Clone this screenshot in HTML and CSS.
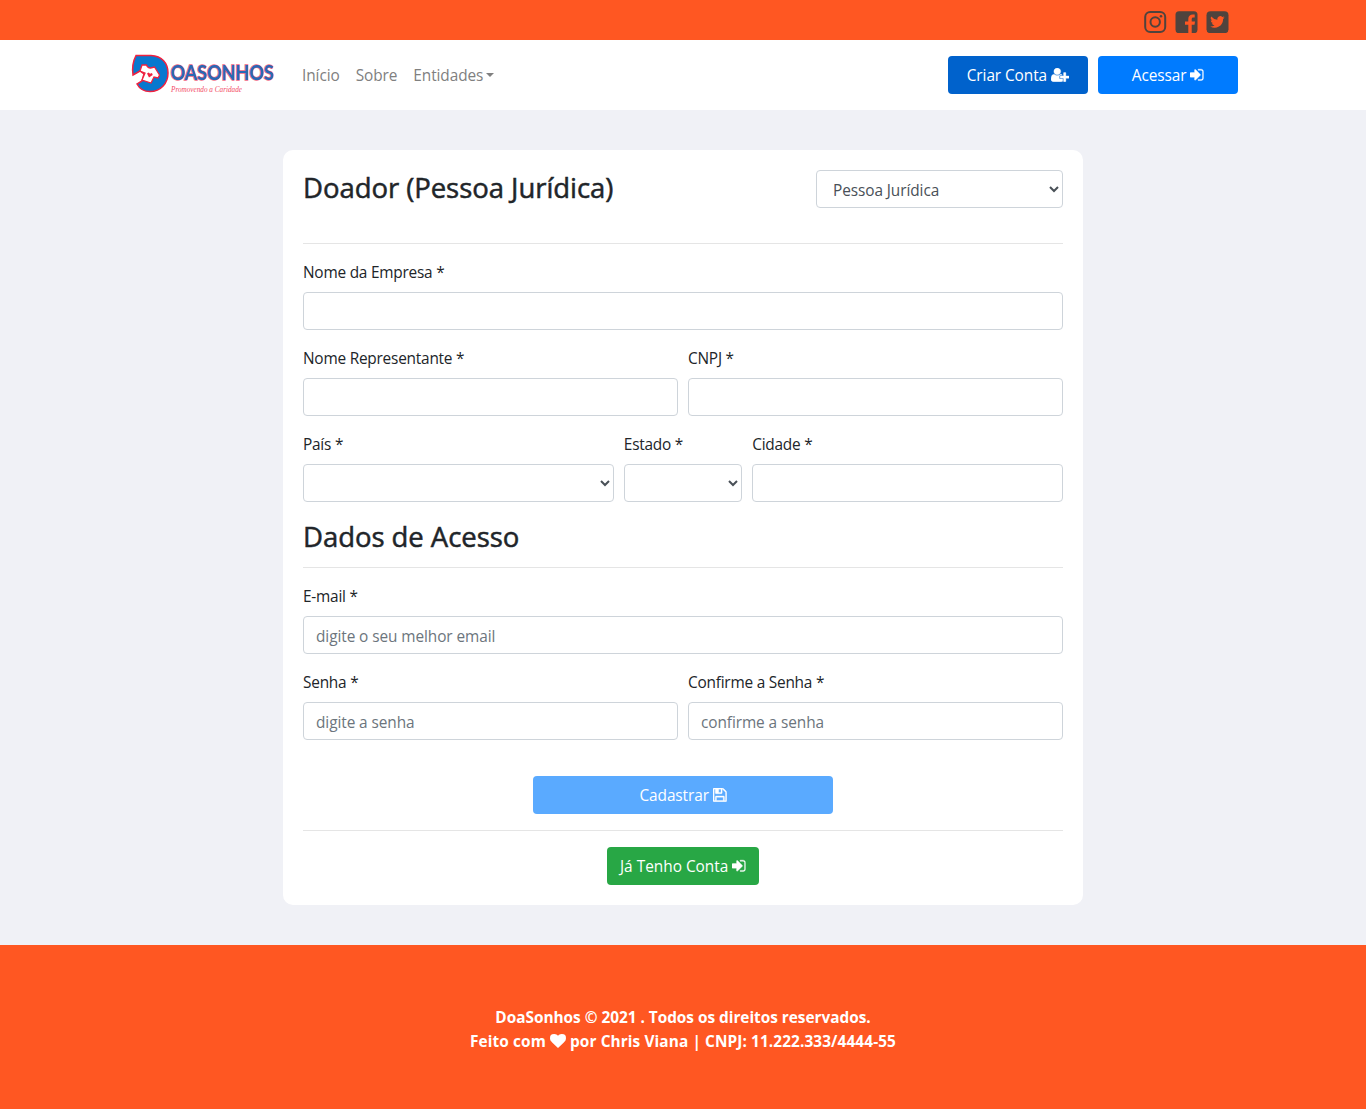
FILE: index.html
```html
<!DOCTYPE html>
<html lang="pt-BR">
<head>
<meta charset="utf-8">
<title>DoaSonhos</title>
<link rel="stylesheet" href="styles.css">
</head>
<body>
<svg class="sprite" aria-hidden="true">
  <symbol id="sign-in" viewBox="0 128 1536 1536"><path d="M1184 896q0 26-19 45l-544 544q-19 19-45 19t-45-19-19-45v-288h-448q-26 0-45-19t-19-45v-384q0-26 19-45t45-19h448v-288q0-26 19-45t45-19 45 19l544 544q19 19 19 45zm352-352v704q0 119-84.500 203.500t-203.500 84.500h-320q-13 0-22.500-9.500t-9.500-22.500q0-4-1-20t-.5-26.500 3-23.500 10-19.500 20.500-6.500h320q66 0 113-47t47-113v-704q0-66-47-113t-113-47h-312l-11.500-1-11.500-3-8-5.500-7-9-2-13.500q0-4-1-20t-.5-26.500 3-23.500 10-19.500 20.500-6.500h320q119 0 203.500 84.500t84.500 203.500z"/></symbol>
</svg>
<div class="topbar">
  <div class="container social">
    <svg width="23" height="23" viewBox="0 0 23 23" fill="none" stroke="#50433d" stroke-width="2"><rect x="1.200" y="2" width="20" height="20" rx="5"/><circle cx="11.200" cy="12" r="4.700"/><circle cx="17" cy="6.200" r="1.300" fill="#50433d" stroke="none"/></svg>
    <svg width="23" height="23" viewBox="0 0 23 23"><rect x=".5" y="1.200" width="22" height="22" rx="3.500" fill="#50433d"/><path fill="#ff5722" d="M13.300 23v-8.200h-3.300v-3.300h3.300V9.100c0-3 1.800-4.600 4.400-4.600h2v3.100h-1.300c-1.300 0-1.700.7-1.700 1.700v2.200H20l-.5 3.300h-2.800V23z"/></svg>
    <svg width="23" height="23" viewBox="0 0 23 23"><rect x=".5" y="1.200" width="22" height="22" rx="4" fill="#50433d"/><path fill="#ff5722" transform="translate(4.200 4.700) scale(.6)" d="M24 4.600a10 10 0 0 1-2.800.8 5 5 0 0 0 2.200-2.700 10 10 0 0 1-3.100 1.200 4.900 4.900 0 0 0-8.400 4.500A14 14 0 0 1 1.700 3.200a4.900 4.900 0 0 0 1.500 6.500 5 5 0 0 1-2.200-.6c0 2.300 1.600 4.400 3.900 4.900a5 5 0 0 1-2.200.1 4.900 4.900 0 0 0 4.600 3.400A9.900 9.900 0 0 1 0 19.500 14 14 0 0 0 21.500 7.100 10 10 0 0 0 24 4.600z"/></svg>
  </div>
</div>
<header class="header">
  <div class="container navbar">
    <svg class="logo" width="150" height="50" viewBox="0 0 150 50">
      <path d="M8 5.500H23C34 6 40 13 40 23S33 41.500 22 41.500Q13 41.500 9 34L14 31 16 24 12 21 5 25Q3.500 14 8 5.500z" fill="#0878cf" stroke="#f0213f" stroke-width="1.500"/>
      <path d="M14 15h4.500q1 3 4 3l4-1 5 8-1.500 3-4-1-3 6-9-3 3-7-5-2z" fill="#fff" stroke="#f0213f" stroke-width="1.300"/>
      <path d="M19 23.500l1.700-1 1.300 1.200 2-.7.700 2-3.700 2.500z" fill="#f0213f"/>
      <text class="logo-name" x="42.500" y="30" textLength="103" lengthAdjust="spacingAndGlyphs">OASONHOS</text>
      <text class="logo-tag" x="43" y="42" textLength="71" lengthAdjust="spacingAndGlyphs">Promovendo a Caridade</text>
    </svg>
    <nav class="menu"><a>Início</a><a>Sobre</a><a class="dropdown">Entidades</a></nav>
    <div class="actions">
      <button class="btn dark">Criar Conta <svg class="icon wide" viewBox="0 128 2048 1536"><path d="M704 896q-159 0-271.500-112.500t-112.500-271.500 112.500-271.500 271.500-112.500 271.500 112.500 112.500 271.500-112.500 271.500-271.500 112.500zm960 128h352q13 0 22.500 9.500t9.500 22.500v192q0 13-9.500 22.500t-22.500 9.500h-352v352q0 13-9.500 22.500t-22.500 9.500h-192q-13 0-22.500-9.500t-9.500-22.500v-352h-352q-13 0-22.500-9.500t-9.500-22.500v-192q0-13 9.500-22.500t22.500-9.500h352v-352q0-13 9.500-22.500t22.500-9.500h192q13 0 22.500 9.500t9.500 22.500v352zm-736 224q0 52 38 90t90 38h256v238q-68 50-171 50h-874q-121 0-194-69t-73-190q0-53 3.500-103.500t14-109 26.500-108.500 43-97.500 62-81 85.500-53.500 111.500-20q19 0 39 17 79 61 154.500 91.500t164.500 30.500 164.500-30.500 154.500-91.500q20-17 39-17 132 0 217 96h-223q-52 0-90 38t-38 90v192z"/></svg></button>
      <button class="btn">Acessar <svg class="icon"><use href="#sign-in"/></svg></button>
    </div>
  </div>
</header>
<main class="main">
  <form class="card">
    <div class="card-head">
      <h3>Doador (Pessoa Jurídica)</h3>
      <select class="control kind"><option>Pessoa Jurídica</option></select>
    </div>
    <hr>
    <div class="row">
      <label class="field full"><span>Nome da Empresa *</span><input class="control"></label>
      <label class="field half"><span>Nome Representante *</span><input class="control"></label>
      <label class="field half"><span>CNPJ *</span><input class="control"></label>
    </div>
    <div class="row place">
      <label class="field"><span>País *</span><select class="control"></select></label>
      <label class="field"><span>Estado *</span><select class="control"></select></label>
      <label class="field"><span>Cidade *</span><input class="control"></label>
    </div>
    <h3 class="access">Dados de Acesso</h3>
    <hr>
    <div class="row">
      <label class="field full"><span>E-mail *</span><input class="control" placeholder="digite o seu melhor email"></label>
      <label class="field half"><span>Senha *</span><input class="control" placeholder="digite a senha"></label>
      <label class="field half"><span>Confirme a Senha *</span><input class="control" placeholder="confirme a senha"></label>
    </div>
    <div class="submit"><button type="button" class="btn save">Cadastrar <svg class="icon" viewBox="128 128 1536 1536"><path d="M512 1536h768v-384h-768v384zm896 0h128v-896q0-14-10-38.500t-20-34.500l-281-281q-10-10-34-20t-39-10v416q0 40-28 68t-68 28h-576q-40 0-68-28t-28-68v-416h-128v1280h128v-416q0-40 28-68t68-28h832q40 0 68 28t28 68v416zm-384-928v-320q0-13-9.500-22.500t-22.500-9.500h-192q-13 0-22.500 9.500t-9.500 22.500v320q0 13 9.500 22.500t22.500 9.500h192q13 0 22.500-9.500t9.500-22.500zm640 32v928q0 40-28 68t-68 28h-1344q-40 0-68-28t-28-68v-1344q0-40 28-68t68-28h928q40 0 88 20t76 48l280 280q28 28 48 76t20 88z"/></svg></button></div>
    <hr>
    <div class="login"><button type="button" class="btn green">Já Tenho Conta <svg class="icon"><use href="#sign-in"/></svg></button></div>
  </form>
</main>
<footer class="footer">
  <div class="copyright">DoaSonhos © 2021 . Todos os direitos reservados.</div>
  <div class="credits">Feito com <svg class="icon heart" viewBox="0 128 1792 1536"><path d="M896 1664q-26 0-44-18l-624-602q-10-8-27.500-26t-55.500-65.500-68-97.500-53.500-121-23.500-138q0-220 127-344t351-124q62 0 126.500 21.500t120 58 95.500 68.500 76 68q36-36 76-68t95.500-68.500 120-58 126.500-21.500q224 0 351 124t127 344q0 221-229 450l-623 600q-18 18-44 18z"/></svg> por Chris Viana | CNPJ: 11.222.333/4444-55</div>
</footer>
</body>
</html>
```
FILE: styles.css
```css
* { box-sizing: border-box; }
body {
  margin: 0;
  background: #f0f1f6;
  color: #212529;
  font: 400 15.4px/24px "Open Sans", "Noto Sans", sans-serif;
  letter-spacing: -0.08px;
}
.sprite { display: none; }
.container { width: 1110px; margin: 0 auto; }
.topbar { height: 40px; background: #ff5722; }
.social { display: flex; justify-content: flex-end; gap: 8px; padding: 10px 9px 0 0; }
.header { height: 70px; background: #fff; }
.navbar { display: flex; align-items: center; height: 70px; }
.logo { margin: 0 16px 0 0; overflow: visible; }
.logo-name { font: 700 20px "Lato", sans-serif; letter-spacing: 0; fill: #2868b5; stroke: #f0647f; stroke-width: 1.3px; paint-order: stroke; }
.logo-tag { font: italic 9px "Liberation Serif", serif; letter-spacing: 0; fill: #f34b66; }
.menu { display: flex; gap: 16px; padding: 1px 0 0 8px; color: #808080; }
.dropdown::after { content: ""; display: inline-block; margin-left: 3px; vertical-align: 4px; border: 4.8px solid transparent; border-top-color: currentColor; border-bottom: 0; }
.actions { display: flex; gap: 10px; margin-left: auto; }
.btn { width: 140px; height: 38px; padding: 2px 0 0; border: 0; border-radius: 4px; background: #007bff; color: #fff; font: inherit; letter-spacing: inherit; white-space: nowrap; }
.btn.dark { background: #0062cc; }
.icon { width: 13.7px; height: 13.7px; vertical-align: -1.14px; fill: currentColor; stroke: currentColor; stroke-width: 40; }
.icon.wide { width: 18.3px; }
.icon.heart { width: 16px; }
.main { padding: 40px 0; }
.card { width: 800px; height: 755px; margin: 0 auto; padding: 20px; border-radius: 10px; background: #fff; }
.card-head { display: flex; justify-content: space-between; height: 57px; }
h3 { margin: 0; font-size: 27.5px; line-height: 33px; font-weight: 400; letter-spacing: -0.05px; -webkit-text-stroke: 0.5px currentColor; }
h3.access { padding-top: 2px; line-height: 33px; height: 33px; }
.card-head h3 { padding-top: 1px; }
hr { margin: 16px 0; border: 0; border-top: 1px solid rgba(0, 0, 0, .1); }
.row { display: flex; flex-wrap: wrap; column-gap: 10px; }
.place { display: grid; grid-template-columns: 310.8px 118.4px 310.8px; }
.field { display: block; margin-bottom: 16px; }
.field span { display: block; height: 32px; padding-top: 1px; letter-spacing: -0.22px; }
.full { width: 760px; }
.half { width: 375px; }
.control { display: block; width: 100%; height: 38px; padding: 7px 12px 5px; border: 1px solid #ced4da; border-radius: 4px; background: #fff; color: #495057; font: inherit; letter-spacing: inherit; }
.control::placeholder { color: #6c757d; opacity: 1; }
.control.kind { width: 247px; }
.submit, .login { display: flex; justify-content: center; }
.submit { padding-top: 20px; }
.btn.save { width: 300px; background: #5aaaff; }
.btn.green { width: 152px; background: #28a745; letter-spacing: 0; }
.footer { height: 164px; padding-top: 61px; background: #ff5722; color: #fff; text-align: center; font-weight: 700; }
.copyright { letter-spacing: -0.03px; }
.credits { letter-spacing: 0.09px; }
```
